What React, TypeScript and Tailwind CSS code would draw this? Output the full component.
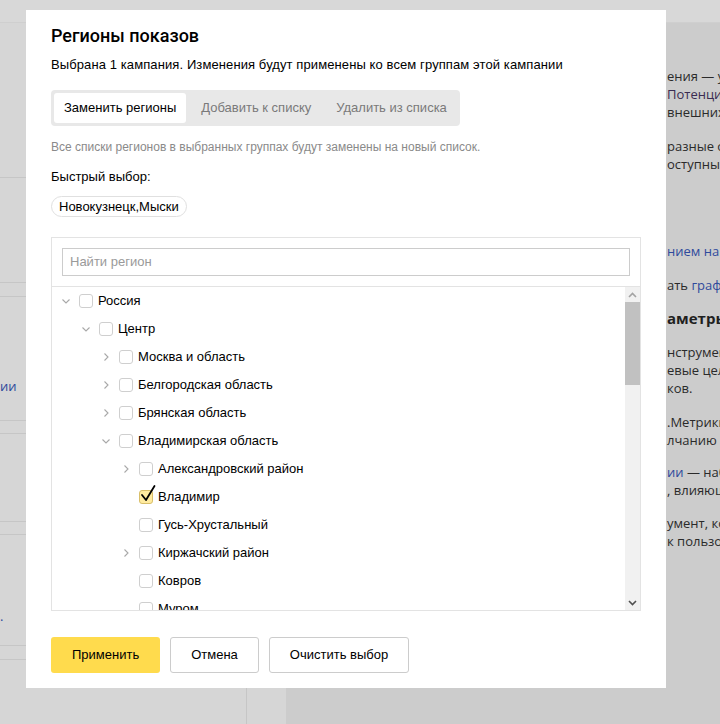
import React from "react";

type Row = { level: number; label: string; state: "open" | "closed" | "leaf"; checked?: boolean };

const rows: Row[] = [
  { level: 0, label: "Россия", state: "open" },
  { level: 1, label: "Центр", state: "open" },
  { level: 2, label: "Москва и область", state: "closed" },
  { level: 2, label: "Белгородская область", state: "closed" },
  { level: 2, label: "Брянская область", state: "closed" },
  { level: 2, label: "Владимирская область", state: "open" },
  { level: 3, label: "Александровский район", state: "closed" },
  { level: 3, label: "Владимир", state: "leaf", checked: true },
  { level: 3, label: "Гусь-Хрустальный", state: "leaf" },
  { level: 3, label: "Киржачский район", state: "closed" },
  { level: 3, label: "Ковров", state: "leaf" },
  { level: 3, label: "Муром", state: "leaf" },
];

const indent = ["pl-[8px]", "pl-[28px]", "pl-[48px]", "pl-[68px]"];

function Chevron({ dir }: { dir: "down" | "right" }) {
  return (
    <svg width="12" height="12" viewBox="0 0 12 12" className="shrink-0">
      {dir === "down" ? (
        <path d="M2.5 4.5 L6 8 L9.5 4.5" fill="none" stroke="#a8a8a8" strokeWidth="1.1" />
      ) : (
        <path d="M4.5 2.5 L8 6 L4.5 9.5" fill="none" stroke="#a8a8a8" strokeWidth="1.1" />
      )}
    </svg>
  );
}

function Checkbox({ checked }: { checked?: boolean }) {
  return (
    <div className="relative shrink-0">
      <div
        className={
          checked
            ? "w-[14px] h-[14px] rounded-[3px] border border-[#d9bf6a] bg-[#ffeba0]"
            : "w-[14px] h-[14px] rounded-[3px] border border-[#cfcfcf] bg-white"
        }
      />
      {checked && (
        <svg width="18" height="20" viewBox="0 0 18 20" className="absolute left-[1px] top-[-6px]">
          <path d="M2 11 L6 16 L14.5 2" fill="none" stroke="#000" strokeWidth="1.8" strokeLinecap="round" strokeLinejoin="round" />
        </svg>
      )}
    </div>
  );
}

function TreeRow({ row }: { row: Row }) {
  return (
    <div className={`flex items-center h-[28px] shrink-0 ${indent[row.level]}`}>
      <div className="w-[12px] h-[12px] shrink-0 flex items-center justify-center">
        {row.state === "open" && <Chevron dir="down" />}
        {row.state === "closed" && <Chevron dir="right" />}
      </div>
      <div className="ml-[7px]">
        <Checkbox checked={row.checked} />
      </div>
      <span className="ml-[5px] text-[13px] text-black whitespace-nowrap">{row.label}</span>
    </div>
  );
}

function Scrollbar() {
  return (
    <div className="w-[15px] shrink-0 bg-[#f1f1f1] flex flex-col">
      <div className="h-[15px] flex items-center justify-center">
        <svg width="9" height="6" viewBox="0 0 9 6">
          <path d="M1 5 L4.5 1.5 L8 5" fill="none" stroke="#a3a3a3" strokeWidth="1.6" />
        </svg>
      </div>
      <div className="h-[83px] mx-0 bg-[#c1c1c1]" />
      <div className="flex-1" />
      <div className="h-[15px] flex items-center justify-center">
        <svg width="9" height="6" viewBox="0 0 9 6">
          <path d="M1 1 L4.5 4.5 L8 1" fill="none" stroke="#505050" strokeWidth="1.6" />
        </svg>
      </div>
    </div>
  );
}

function Background() {
  const line = "border-b border-[#c6c6c6]";
  return (
    <div className="absolute inset-0 flex flex-col bg-[#cccccc] font-['Open_Sans',sans-serif]">
      <div className="h-[23px] shrink-0 bg-[#d8d8d8] border-b border-[#cfcfcf]" />
      <div className="flex flex-1">
        <div className="w-[286px] shrink-0 bg-[#d6d6d6] flex">
          <div className="w-[247px] border-r border-[#c6c6c6] flex flex-col">
            <div className={`h-[155px] shrink-0 ${line}`} />
            <div className={`h-[105px] shrink-0 ${line}`} />
            <div className={`h-[14px] shrink-0 ${line}`} />
            <div className="h-[80px] shrink-0" />
            <div className="text-[13px] leading-[18px] text-[#2f4a9c]">ии</div>
            <div className={`h-[26px] shrink-0 ${line}`} />
            <div className={`h-[13px] shrink-0 ${line}`} />
            <div className={`h-[88px] shrink-0 ${line}`} />
            <div className={`h-[13px] shrink-0 ${line}`} />
            <div className="h-[72px] shrink-0" />
            <div className="text-[13px] leading-[18px] text-[#2f4a9c]">.</div>
            <div className={`h-[21px] shrink-0 ${line}`} />
            <div className={`h-[14px] shrink-0 ${line}`} />
          </div>
        </div>
        <div className="flex-1 pl-[381px] text-[13px] leading-[18px] text-[#2a2a2a] whitespace-nowrap">
          <div className="mt-[44px]">
            <div>ения — уникальная</div>
            <div className="text-[#3a2c52]">Потенциальные</div>
            <div>внешних факторов</div>
          </div>
          <div className="mt-[16px]">
            <div>разные объявления</div>
            <div>оступных</div>
          </div>
          <div className="mt-[69px] text-[#2f4a9c]">нием на мобильных</div>
          <div className="mt-[16px]">
            ать <span className="text-[#2f4a9c]">графики</span>
          </div>
          <div className="mt-[14px] text-[15px] leading-[20px] font-bold text-[#1f1f1f]">аметры</div>
          <div className="mt-[15px]">
            <div>нструмент</div>
            <div>евые цели</div>
            <div>ков.</div>
          </div>
          <div className="mt-[16px]">
            <div>.Метрики</div>
            <div>лчанию в</div>
          </div>
          <div className="mt-[14px]">
            <div>
              <span className="text-[#2f4a9c]">ии</span> — набор
            </div>
            <div>, влияющие</div>
          </div>
          <div className="mt-[15px]">
            <div>умент, который</div>
            <div>к пользователям</div>
          </div>
        </div>
      </div>
    </div>
  );
}

export default function App() {
  return (
    <div className="relative w-[720px] h-[724px] overflow-hidden">
      <Background />
      <div className="absolute left-[26px] top-[10px] w-[640px] h-[678px] bg-white px-[25px] pt-[14px] flex flex-col font-['Liberation_Sans',Arial,sans-serif] text-black">
        <div className="text-[18px] leading-[24px] font-medium font-['Roboto',sans-serif]">Регионы показов</div>
        <div className="mt-[8px] text-[13px] leading-[18px] tracking-[0.1px]">
          Выбрана 1 кампания. Изменения будут применены ко всем группам этой кампании
        </div>
        <div className="mt-[16px] self-start flex gap-[5px] p-[3px] rounded-[4px] bg-[#e8e8e8]">
          <div className="h-[30px] px-[10px] flex items-center rounded-[3px] bg-white text-[13px] text-black">
            Заменить регионы
          </div>
          <div className="h-[30px] px-[10px] flex items-center text-[13px] text-[#7a7a7a]">Добавить к списку</div>
          <div className="h-[30px] px-[10px] flex items-center text-[13px] text-[#7a7a7a]">Удалить из списка</div>
        </div>
        <div className="mt-[13px] text-[12px] leading-[16px] text-[#8a8a8a]">
          Все списки регионов в выбранных группах будут заменены на новый список.
        </div>
        <div className="mt-[13px] text-[13px] leading-[18px]">Быстрый выбор:</div>
        <div className="mt-[10px] self-start h-[21px] px-[7px] flex items-center rounded-full border border-[#e0e0e0] text-[13px]">
          Новокузнецк,Мыски
        </div>
        <div className="mt-[20px] h-[374px] border border-[#e3e3e3] flex flex-col">
          <div className="p-[10px] border-b border-[#e3e3e3] shrink-0">
            <div className="h-[28px] border border-[#cccccc] flex items-center pl-[7px] text-[13px] text-[#9a9a9a]">
              Найти регион
            </div>
          </div>
          <div className="flex flex-1 min-h-0">
            <div className="flex-1 overflow-hidden flex flex-col">
              {rows.map((r) => (
                <TreeRow key={r.label} row={r} />
              ))}
            </div>
            <Scrollbar />
          </div>
        </div>
        <div className="mt-[26px] flex gap-[10px]">
          <div className="h-[36px] px-[21px] flex items-center rounded-[3px] bg-[#ffdb4d] text-[13px]">Применить</div>
          <div className="h-[36px] px-[20px] flex items-center rounded-[3px] border border-[#cccccc] text-[13px]">Отмена</div>
          <div className="h-[36px] px-[20px] flex items-center rounded-[3px] border border-[#cccccc] text-[13px]">
            Очистить выбор
          </div>
        </div>
      </div>
    </div>
  );
}
